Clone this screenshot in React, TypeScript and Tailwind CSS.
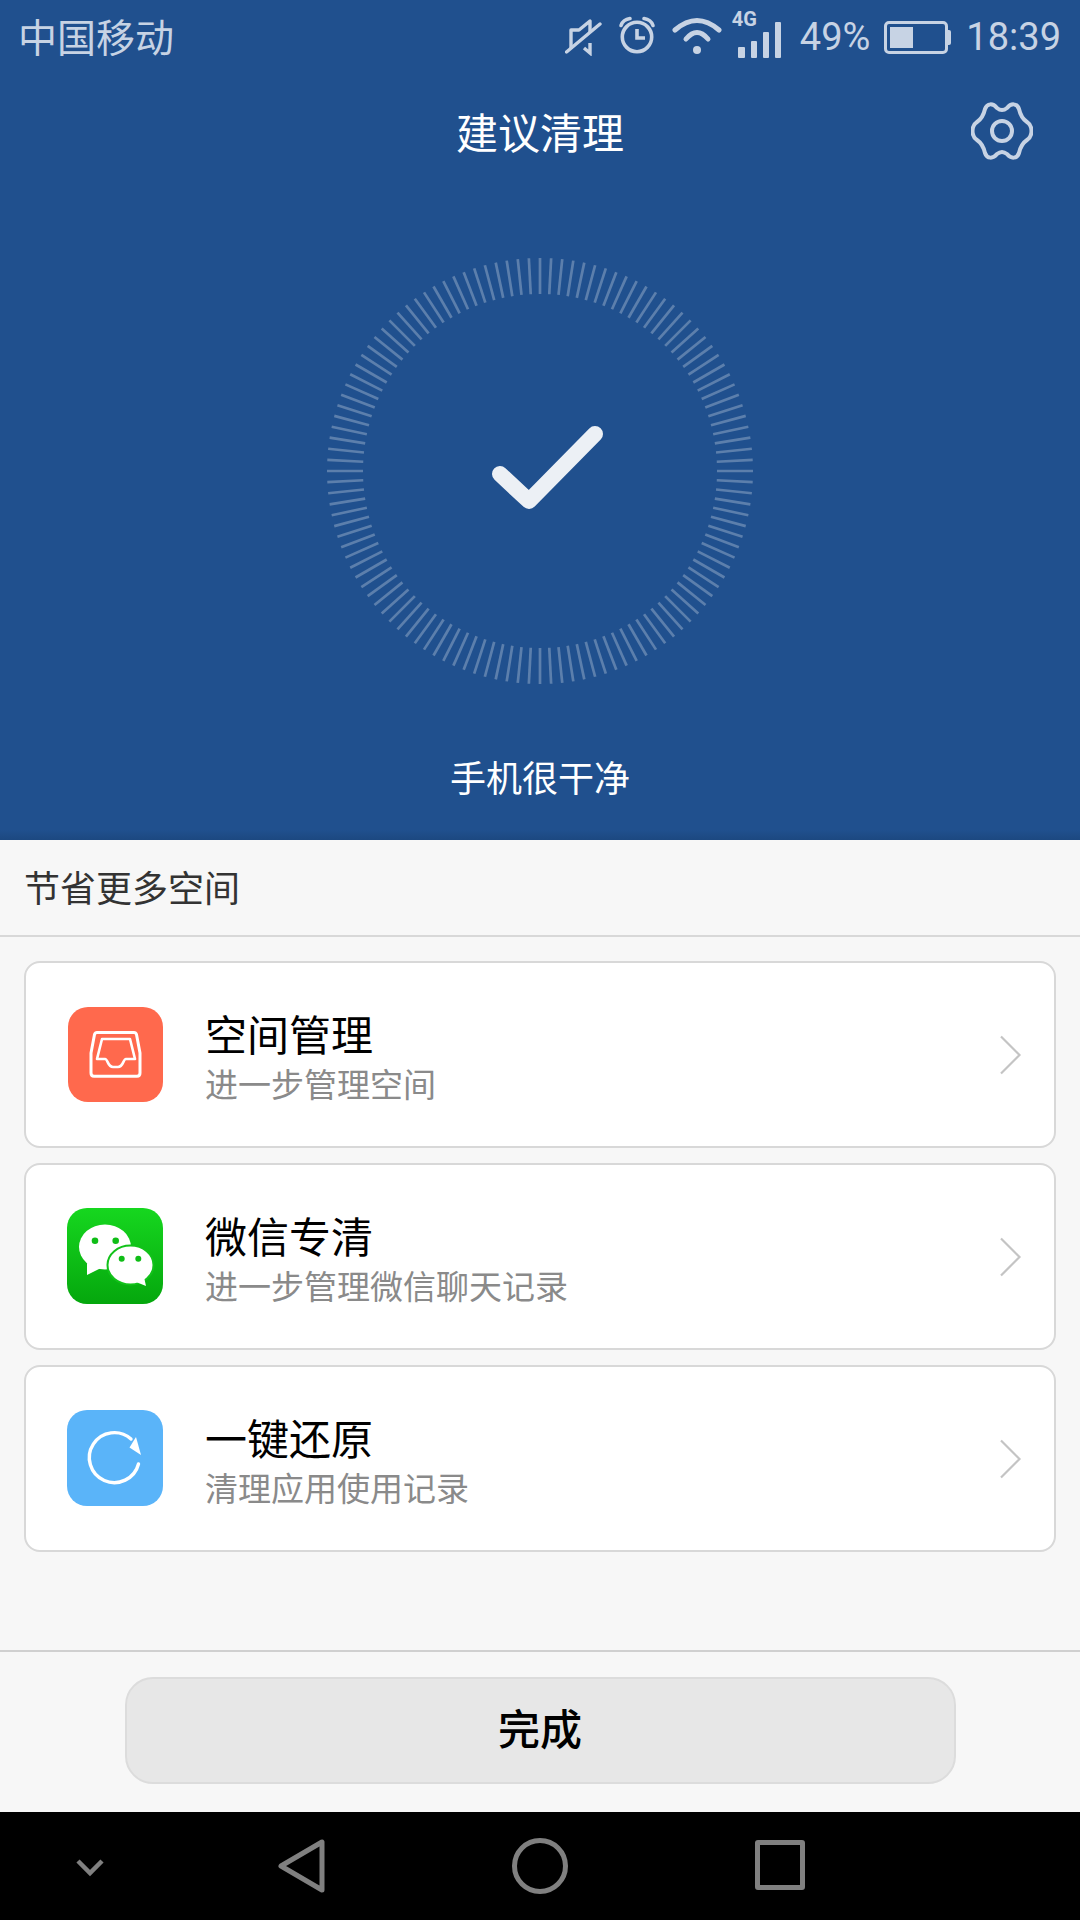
const FONT = "font-['Noto_Sans_CJK_SC','Noto_Sans',sans-serif]";

function Ticks() {
  const ticks = Array.from({ length: 120 }, (_, i) => i * 3);
  return (
    <svg width="440" height="440" viewBox="-220 -220 440 440">
      {ticks.map((a) => (
        <line key={a} x1="0" y1="-213" x2="0" y2="-177" stroke="#ffffff" strokeOpacity="0.27" strokeWidth="2.7" transform={`rotate(${a})`} />
      ))}
      <path d="M-40 3 L-11 30 L55 -37" fill="none" stroke="#ecf0f5" strokeWidth="16" strokeLinecap="round" strokeLinejoin="round" />
    </svg>
  );
}

function StatusBar() {
  const c = "#c7d3e4";
  return (
    <div className="flex h-[72px] items-center pl-[18px] pr-[19px] text-[#c7d3e4]">
      <span className={`mb-[2px] text-[39px] leading-none ${FONT}`}>中国移动</span>
      <div className="ml-auto flex items-center">
        <svg width="38" height="40" viewBox="0 0 38 40" fill="none" stroke={c} strokeWidth="3.4">
          <path d="M6 33 V14 H14 L25 5 V17" strokeLinejoin="round" />
          <path d="M25 27 V37 L19 32" />
          <path d="M1.5 36 L35 8" strokeLinecap="round" />
        </svg>
        <svg className="ml-[15px]" width="38" height="40" viewBox="0 0 38 40" fill="none" stroke={c} strokeWidth="3.6">
          <circle cx="19" cy="21" r="14.7" />
          <path d="M19 13 V22 H27" />
          <path d="M3 9.5 Q5 3.5 12 2.5 M35 9.5 Q33 3.5 26 2.5" strokeLinecap="round" />
        </svg>
        <svg className="ml-[16px]" width="50" height="38" viewBox="0 0 50 38" fill="none" stroke={c} strokeWidth="5" strokeLinecap="round">
          <path d="M3 13 Q25 -6 47 13" />
          <path d="M14 22 Q25 9 36 22" />
          <circle cx="25" cy="33" r="4" fill={c} stroke="none" />
        </svg>
        <div className="relative ml-[10px] h-[44px] w-[50px]">
          <span className="absolute left-0 top-[-5px] font-['Roboto',sans-serif] text-[20px] font-bold leading-none">4G</span>
          <div className="absolute bottom-0 left-[6px] flex items-end gap-[6px]">
            <div className="h-[11px] w-[7px] rounded-[1px] bg-[#c7d3e4]" />
            <div className="h-[17px] w-[6px] rounded-[1px] bg-[#c7d3e4]" />
            <div className="h-[26px] w-[6px] rounded-[1px] bg-[#c7d3e4]" />
            <div className="h-[36px] w-[6px] rounded-[1px] bg-[#c7d3e4]" />
          </div>
        </div>
        <span className="ml-[18px] mt-[2px] font-['Roboto',sans-serif] text-[38px] leading-none">49%</span>
        <div className="ml-[14px] mt-[2px] flex items-center">
          <div className="h-[33px] w-[64px] rounded-[5px] border-[3px] border-[#c7d3e4] p-[3px]">
            <div className="h-full w-[23px] bg-[#c7d3e4]" />
          </div>
          <div className="h-[15px] w-[3px] rounded-r-[2px] bg-[#c7d3e4]" />
        </div>
        <span className="ml-[15px] mt-[2px] font-['Roboto',sans-serif] text-[38px] leading-none">18:39</span>
      </div>
    </div>
  );
}

function Gear() {
  return (
    <svg width="62" height="58" viewBox="0 0 62 58" fill="none" stroke="#c7d3e4" strokeWidth="4">
      <path
        transform="translate(31 29)"
        d="M-5 -23 Q0 -19 5 -23 C9 -28 15 -28 17 -22 Q19 -13 25 -9 C31 -5 31 5 25 9 Q19 13 17 22 C15 28 9 28 5 23 Q0 19 -5 23 C-9 28 -15 28 -17 22 Q-19 13 -25 9 C-31 5 -31 -5 -25 -9 Q-19 -13 -17 -22 C-15 -28 -9 -28 -5 -23 Z"
      />
      <circle cx="31" cy="29" r="10" />
    </svg>
  );
}

function Inbox() {
  return (
    <div className="ml-[1px] h-[95px] w-[95px] rounded-[20px] bg-[#ff694d]">
      <svg width="95" height="95" viewBox="0 0 95 95" fill="none" stroke="#ffffff" strokeLinejoin="round">
        <path strokeWidth="3" d="M29 25.5 H66 C67.5 25.5 68 26 68.5 27.5 L72 46 V66 C72 68 71 69.2 69 69.2 H26 C24 69.2 23 68 23 66 V46 L26.5 27.5 C27 26 27.5 25.5 29 25.5 Z" />
        <path strokeWidth="2.6" d="M34 32 H62 L67 52 H58 C55 52 55.5 60 50 60 H45 C39.5 60 40 52 37 52 H29 Z" />
      </svg>
    </div>
  );
}

function WeChat() {
  return (
    <div className="-mt-[2px] h-[96px] w-[96px] rounded-[20px] bg-gradient-to-b from-[#16d71f] to-[#05a70d]">
      <svg width="96" height="96" viewBox="0 0 96 96" fill="none">
        <ellipse cx="38" cy="39" rx="26" ry="22.5" fill="#fff" />
        <path d="M20 55 L20 67 L34 60 Z" fill="#fff" />
        <ellipse cx="63.5" cy="57" rx="23" ry="19.5" fill="#fff" stroke="#12c21a" strokeWidth="2" />
        <path d="M69 74 L79 78 L77 69 Z" fill="#fff" />
        <circle cx="28" cy="32.7" r="3.3" fill="#0fbd16" />
        <circle cx="48.7" cy="32.7" r="3.3" fill="#0fbd16" />
        <circle cx="54.7" cy="50.7" r="3" fill="#0fbd16" />
        <circle cx="71.3" cy="50.7" r="3" fill="#0fbd16" />
      </svg>
    </div>
  );
}

function Restore() {
  return (
    <div className="-mt-[2px] h-[96px] w-[96px] rounded-[20px] bg-[#5ab4f9]">
      <svg width="96" height="96" viewBox="0 0 96 96" fill="none">
        <path d="M71.5 54 A25 25 0 1 1 64 29" stroke="#fff" strokeWidth="3.4" strokeLinecap="round" />
        <path d="M74 45 L62.5 37.5 L69 27 Z" fill="#fff" />
      </svg>
    </div>
  );
}

function Card({ icon, title, sub }: { icon: React.ReactNode; title: string; sub: string }) {
  return (
    <div className="flex h-[187px] items-center rounded-[16px] border-2 border-[#d8d8d8] bg-white pl-[41px] pr-[32px]">
      <div className="w-[95px] shrink-0">{icon}</div>
      <div className="ml-[43px] flex flex-col">
        <span className="text-[42px] leading-[56px] text-black">{title}</span>
        <span className="text-[33px] leading-[44px] text-[#8a8a8a]">{sub}</span>
      </div>
      <svg className="ml-auto" width="22" height="40" viewBox="0 0 22 40" fill="none" stroke="#c4c4c4" strokeWidth="2.2">
        <path d="M1 1.5 L19.5 20 L1 38.5" />
      </svg>
    </div>
  );
}

export default function App() {
  return (
    <div className={`flex h-[1920px] w-[1080px] flex-col overflow-hidden bg-[#f7f7f7] ${FONT}`}>
      <div className="h-[840px] bg-[#20508e] bg-[linear-gradient(to_bottom,#20508e_0,#20508e_830px,#1c4880_840px)]">
        <StatusBar />
        <div className="relative flex h-[118px] items-center justify-center">
          <span className="text-[42px] leading-none text-white">建议清理</span>
          <div className="absolute right-[47px] top-[30px]"><Gear /></div>
        </div>
        <div className="mt-[61px] flex justify-center"><Ticks /></div>
        <div className="mt-[61px] text-center text-[36px] leading-[48px] text-white">手机很干净</div>
      </div>
      <div className="flex h-[97px] items-center border-b-2 border-[#d8d8d8] pb-[4px] pl-[24px] text-[36px] text-[#333333]">节省更多空间</div>
      <div className="flex flex-1 flex-col gap-[15px] px-[24px] pt-[24px]">
        <Card icon={<Inbox />} title="空间管理" sub="进一步管理空间" />
        <Card icon={<WeChat />} title="微信专清" sub="进一步管理微信聊天记录" />
        <Card icon={<Restore />} title="一键还原" sub="清理应用使用记录" />
      </div>
      <div className="flex h-[162px] items-start justify-center border-t-2 border-[#d0d0d0] pt-[25px]">
        <div className="flex h-[107px] w-[831px] items-center justify-center rounded-[28px] border-2 border-[#dcdcdc] bg-[#e7e7e7] pb-[8px] text-[42px] font-medium text-black">完成</div>
      </div>
      <div className="relative flex h-[108px] items-center bg-black">
        <svg className="absolute left-[76px] top-[47px]" width="28" height="18" viewBox="0 0 28 18" fill="none" stroke="#808080" strokeWidth="4.5"><path d="M2 2 L14 14 L26 2" /></svg>
        <svg className="absolute left-[276px] top-[25px]" width="50" height="58" viewBox="0 0 50 58" fill="none" stroke="#808080" strokeWidth="5" strokeLinejoin="round"><path d="M46 5 V53 L5 29 Z" /></svg>
        <div className="absolute left-[512px] top-[26px] h-[56px] w-[56px] rounded-full border-[5px] border-[#808080]" />
        <div className="absolute left-[755px] top-[28px] h-[50px] w-[50px] rounded-[3px] border-[5px] border-[#808080]" />
      </div>
    </div>
  );
}
